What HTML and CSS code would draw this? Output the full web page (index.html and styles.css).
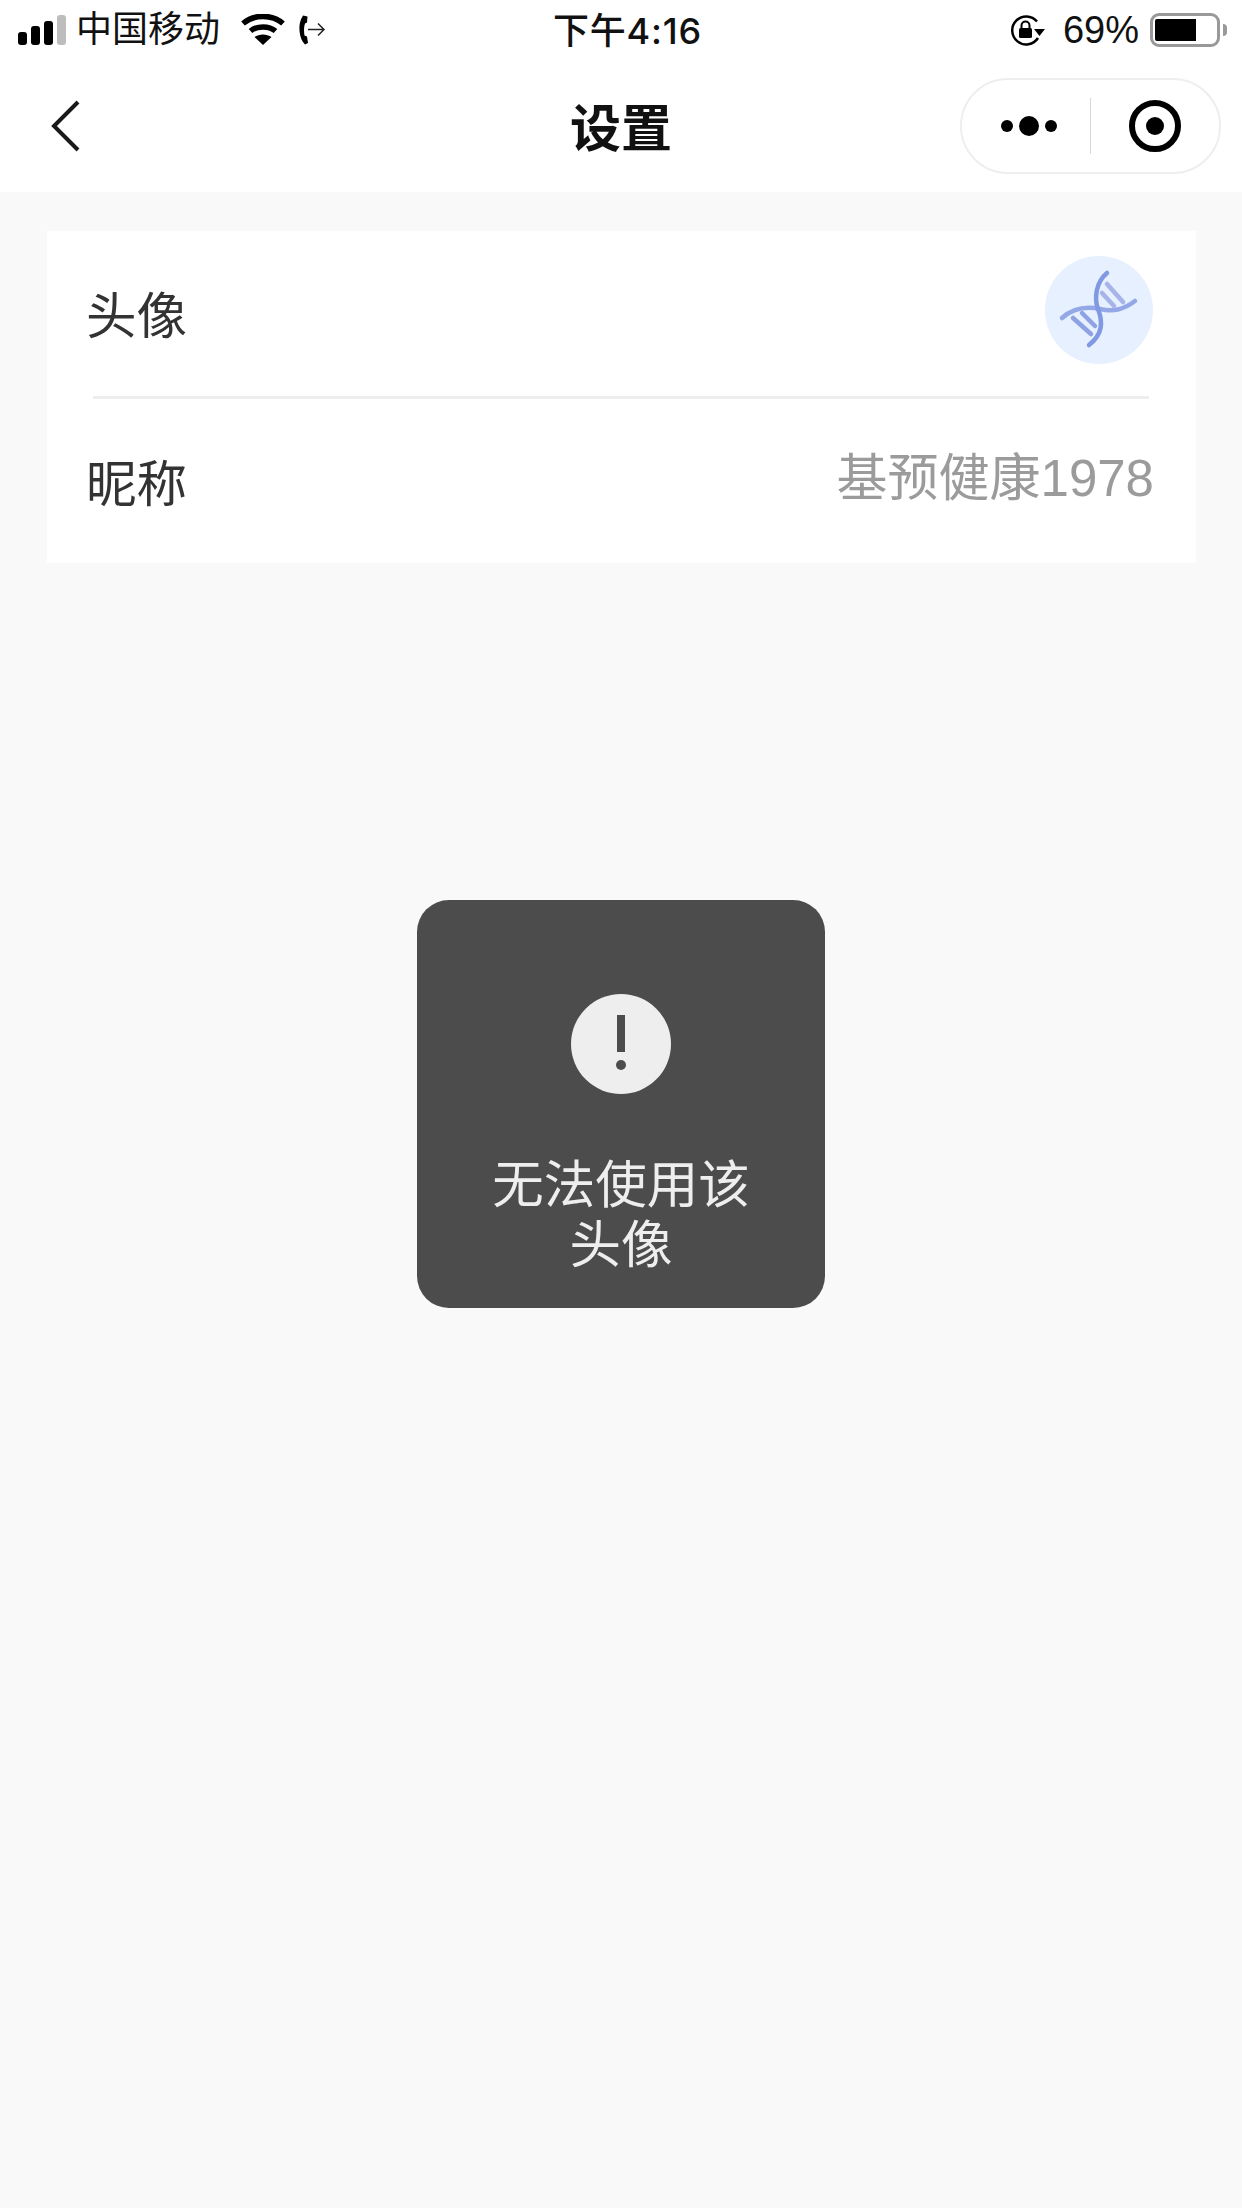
FILE: index.html
```html
<!DOCTYPE html>
<html lang="zh-CN">
<head>
<meta charset="utf-8">
<title>设置</title>
<link rel="stylesheet" href="styles.css">
</head>
<body>
<div class="app">
  <header class="header">
    <div class="status">
      <div class="status-left">
        <svg class="signal" width="50" height="32" viewBox="0 0 50 32">
          <rect x="0" y="17" width="9" height="13" rx="3" fill="#000"/>
          <rect x="13" y="11" width="9" height="19" rx="3" fill="#000"/>
          <rect x="26" y="6" width="9" height="24" rx="3" fill="#000"/>
          <rect x="39" y="0" width="9" height="30" rx="3" fill="#bdbdbd"/>
        </svg>
        <span class="carrier">中国移动</span>
        <svg class="wifi" width="44" height="32" viewBox="0 0 44 32">
          <path d="M2 9.500C13 0 31 0 42 9.500" fill="none" stroke="#000" stroke-width="5.500"/>
          <path d="M9.500 17C16 11.500 28 11.500 34.500 17" fill="none" stroke="#000" stroke-width="5.500"/>
          <path d="M13.500 23C18 19.500 26 19.500 30.500 23L22 31Z" fill="#000"/>
        </svg>
        <svg class="call" width="28" height="32" viewBox="0 0 28 32">
          <path d="M4 1.500C1 6 0 11 .5 17C1 23 3 27.500 6 30.500L9 29L8 22.500L5.500 21.500C4.800 17 4.800 13 6 9.500L8 8.500L8.500 2.500Z" fill="#000"/>
          <path d="M9 15.500H25M19 9.500L25 15.500L19 21.500" fill="none" stroke="#222" stroke-width="1.500"/>
        </svg>
      </div>
      <div class="time">下午4:16</div>
      <div class="status-right">
        <svg class="lock" width="36" height="32" viewBox="0 0 36 32">
          <path d="M27 7.500A14 14 0 1 0 28 24" fill="none" stroke="#000" stroke-width="2.500"/>
          <path d="M24 15H35L29.500 22Z" fill="#000"/>
          <rect x="9" y="14" width="13" height="10" rx="1.500" fill="#000"/>
          <path d="M11.500 14V11.500A4 4 0 0 1 19.500 11.500V14" fill="none" stroke="#000" stroke-width="2"/>
        </svg>
        <span class="percent">69%</span>
        <div class="battery"><div class="battery-fill"></div></div>
        <div class="battery-tip"></div>
      </div>
    </div>
    <div class="nav">
      <svg class="back" width="30" height="52" viewBox="0 0 30 52">
        <path d="M27 2L3 26L27 50" fill="none" stroke="#1a1a1a" stroke-width="4"/>
      </svg>
      <h1 class="title">设置</h1>
      <div class="capsule">
        <div class="capsule-part capsule-dots">
          <span class="dot"></span><span class="dot dot-big"></span><span class="dot"></span>
        </div>
        <div class="capsule-line"></div>
        <div class="capsule-part">
          <div class="target"><div class="target-core"></div></div>
        </div>
      </div>
    </div>
  </header>
  <main class="content">
    <section class="card">
      <div class="row row-avatar">
        <span class="label label-avatar">头像</span>
        <div class="avatar">
          <svg width="108" height="108" viewBox="0 0 108 108">
            <g fill="none" stroke-linecap="round">
              <path d="M17 62C28 52 40 50 55 53C68 56 78 54 90 45" stroke="#94a8e8" stroke-width="4.500"/>
              <path d="M62 17C51 26 49 42 53 53C58 66 58 78 44 89" stroke="#8199e3" stroke-width="4.500"/>
              <path d="M28 62L46 78M37 57L50 70" stroke="#8ea2e4" stroke-width="4.500"/>
              <path d="M57 37L69 50M62 28L78 46" stroke="#a6b4ea" stroke-width="4.500"/>
            </g>
          </svg>
        </div>
      </div>
      <div class="divider"></div>
      <div class="row row-name">
        <span class="label label-name">昵称</span>
        <span class="value">基预健康1978</span>
      </div>
    </section>
  </main>
  <div class="toast">
    <div class="toast-icon"><span class="bang-bar"></span><span class="bang-dot"></span></div>
    <p class="toast-text">无法使用该<br>头像</p>
  </div>
</div>
</body>
</html>
```
FILE: styles.css
```css
* { box-sizing: border-box; }
html, body { margin: 0; padding: 0; }
body { font-family: "Liberation Sans", "Noto Sans CJK SC", sans-serif; background: #f9f9f9; }
.app { position: relative; width: 1242px; height: 2208px; background: #f9f9f9; overflow: hidden; }

.header { height: 192px; background: #fff; display: flex; flex-direction: column; }
.status { height: 60px; padding: 0 15px 0 18px; display: flex; align-items: center; justify-content: space-between; color: #000; position: relative; }
.status-left, .status-right { display: flex; align-items: center; }
.signal { display: block; margin-top: 2px; }
.carrier { margin-left: 8px; font-size: 36px; line-height: 64px; color: #111; }
.wifi { margin-left: 21px; }
.call { margin-left: 14px; }
.time { position: absolute; left: 553px; top: 0; font-family: Inter, "Noto Sans CJK SC", sans-serif; font-size: 36px; line-height: 62px; font-weight: 500; letter-spacing: .8px; color: #111; }
.lock { display: block; margin-left: -1px; }
.percent { margin-left: 17px; font-size: 38px; line-height: 62px; color: #111; }
.battery { margin-left: 11px; width: 70px; height: 34px; border: 3px solid #999; border-radius: 9px; padding: 3px 2px; }
.battery-fill { width: 41px; height: 22px; background: #000; border-radius: 2px 0 0 2px; }
.battery-tip { width: 4px; height: 12px; margin-left: 3px; background: #999; border-radius: 0 4px 4px 0; }

.nav { position: relative; flex: 1; display: flex; align-items: center; justify-content: center; }
.back { position: absolute; left: 51px; top: 40px; }
.title { margin: 4px 0 0; font-size: 51px; line-height: 132px; font-weight: 700; color: #111; }
.capsule { position: absolute; left: 960px; top: 18px; width: 261px; height: 96px; border: 2px solid #eeeeee; border-radius: 48px; background: #fff; display: flex; align-items: center; }
.capsule-part { flex: 1; display: flex; align-items: center; justify-content: center; gap: 6px; }
.capsule-dots { flex: none; width: 128px; padding-left: 6px; }
.capsule-line { width: 1px; height: 56px; background: #d8d8d8; }
.dot { width: 12px; height: 12px; border-radius: 50%; background: #000; }
.dot-big { width: 20px; height: 20px; }
.target { width: 52px; height: 52px; border: 6px solid #000; border-radius: 50%; display: flex; align-items: center; justify-content: center; }
.target-core { width: 18px; height: 18px; border-radius: 50%; background: #000; }

.content { padding: 39px 46px 0 47px; }
.card { background: #fff; height: 332px; display: flex; flex-direction: column; }
.row { display: flex; align-items: center; justify-content: space-between; padding: 0 42px 0 39px; }
.row-avatar { height: 165px; }
.row-name { height: 164px; }
.label { font-size: 50.5px; color: #333; line-height: 60px; }
.label-avatar { margin-top: 6px; }
.label-name { margin-top: 8px; }
.avatar { width: 108px; height: 108px; border-radius: 50%; background: #e6f0fe; margin-right: 1px; margin-top: -8px; }
.avatar svg { display: block; }
.divider { height: 3px; margin: 0 47px 0 46px; background: #eeeeee; }
.value { font-size: 51px; color: #9b9b9b; line-height: 60px; margin-top: -4px; }

.toast { position: absolute; left: 417px; top: 900px; width: 408px; height: 408px; background: #4c4c4c; border-radius: 32px; display: flex; flex-direction: column; align-items: center; padding-top: 94px; }
.toast-icon { width: 100px; height: 100px; border-radius: 50%; background: #eeeeee; display: flex; flex-direction: column; align-items: center; padding-top: 21px; }
.bang-bar { width: 8px; height: 37px; background: #4c4c4c; }
.bang-dot { width: 10px; height: 10px; margin-top: 8px; border-radius: 50%; background: #4c4c4c; }
.toast-text { margin: 61px 0 0; font-size: 51.5px; line-height: 60px; color: #eeeeee; text-align: center; }
```
